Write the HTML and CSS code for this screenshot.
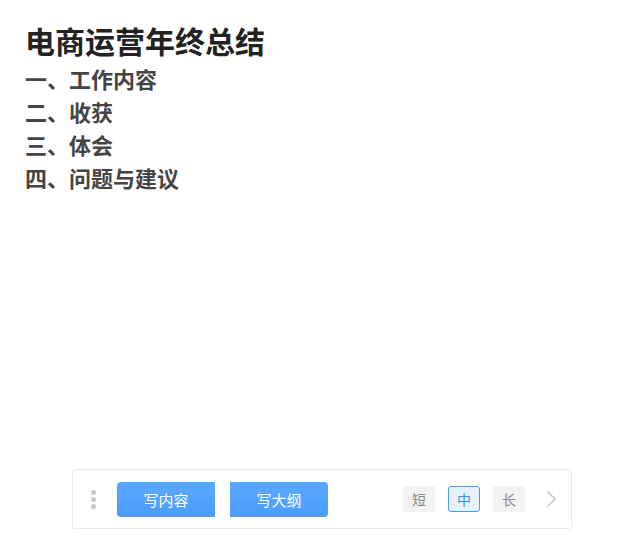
FILE: index.html
```html
<!DOCTYPE html>
<html lang="zh">
<head>
<meta charset="utf-8">
<link rel="stylesheet" href="styles.css">
</head>
<body>
<div class="page">
  <div class="doc">
    <h1 class="title">电商运营年终总结</h1>
    <div class="item">一、工作内容</div>
    <div class="item">二、收获</div>
    <div class="item">三、体会</div>
    <div class="item">四、问题与建议</div>
  </div>
  <div class="toolbar">
    <div class="dots"><span></span><span></span><span></span></div>
    <div class="btn btn-left">写内容</div>
    <div class="btn btn-right">写大纲</div>
    <div class="spacer"></div>
    <div class="len">短</div>
    <div class="len active">中</div>
    <div class="len">长</div>
    <svg class="chev" width="12" height="20" viewBox="0 0 12 20"><path d="M2 2 L10 10 L2 18" fill="none" stroke="#c8c8c8" stroke-width="1.6"/></svg>
  </div>
</div>
</body>
</html>
```
FILE: styles.css
```css
* { box-sizing: border-box; }
html, body { margin: 0; padding: 0; background: #fff; }
body { font-family: "Noto Sans CJK SC", "Liberation Sans", sans-serif; }
.page {
  height: 542px;
  display: flex;
  flex-direction: column;
  padding: 19px 0 13px;
}
.doc { padding-left: 25px; }
.title {
  margin: 0 0 1px;
  font-size: 30px;
  line-height: 42px;
  font-weight: 700;
  color: #222;
}
.item {
  font-size: 22px;
  line-height: 33px;
  font-weight: 700;
  color: #444;
}
.toolbar {
  margin: auto auto 0 72px;
  width: 500px;
  height: 60px;
  border: 1px solid #e8e8e8;
  border-radius: 3px;
  display: flex;
  align-items: center;
  padding: 0 14px 0 17px;
}
.dots {
  display: flex;
  flex-direction: column;
  gap: 2px;
  width: 5px;
  margin-left: 1px;
  margin-right: 21px;
}
.dots span {
  width: 5px; height: 5px; border-radius: 50%;
  background: #c8c8c8;
}
.btn {
  width: 98px;
  height: 35px;
  background: linear-gradient(#5aa8ff, #4a9cff);
  color: #fff;
  font-size: 15px;
  display: flex;
  align-items: center;
  justify-content: center;
}
.btn-left { border-radius: 4px 0 0 4px; margin-right: 15px; }
.btn-right { border-radius: 0 4px 4px 0; }
.spacer { flex: 1; }
.len {
  width: 32px;
  height: 26px;
  border-radius: 3px;
  background: #f2f2f2;
  color: #888;
  font-size: 14px;
  display: flex;
  align-items: center;
  justify-content: center;
  margin-right: 13px;
}
.len.active {
  background: #e6f3ff;
  border: 1px solid #4a9cff;
  color: #3a8ef5;
}
.chev { margin-left: 7px; }
```
